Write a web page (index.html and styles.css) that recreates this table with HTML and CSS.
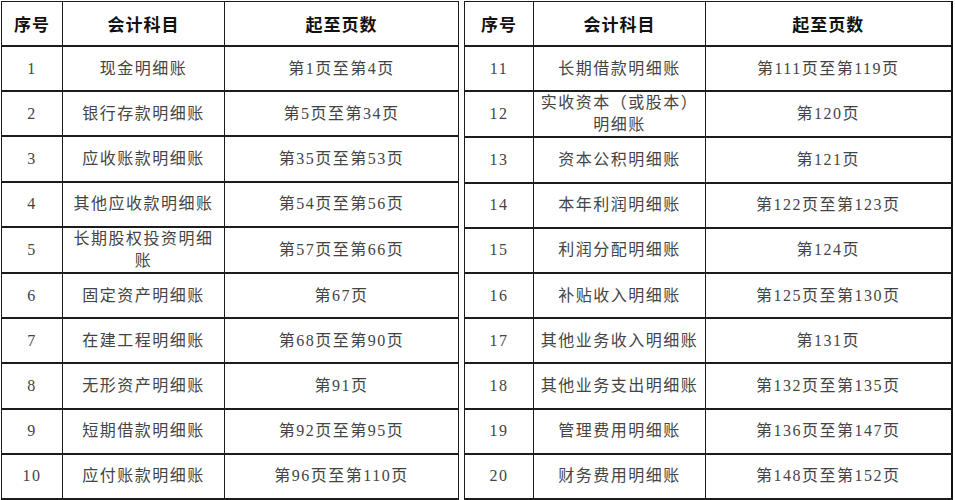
FILE: index.html
```html
<!DOCTYPE html>
<html lang="zh-CN">
<head>
<meta charset="utf-8">
<title>明细账目录</title>
<link rel="stylesheet" href="styles.css">
</head>
<body>
<div class="sheet">
  <table class="ledger ledger-left">
    <colgroup><col class="c-no"><col class="c-name"><col class="c-pages"></colgroup>
    <thead>
      <tr><th>序号</th><th>会计科目</th><th>起至页数</th></tr>
    </thead>
    <tbody>
      <tr><td>1</td><td>现金明细账</td><td>第1页至第4页</td></tr>
      <tr><td>2</td><td>银行存款明细账</td><td>第5页至第34页</td></tr>
      <tr><td>3</td><td>应收账款明细账</td><td>第35页至第53页</td></tr>
      <tr><td>4</td><td>其他应收款明细账</td><td>第54页至第56页</td></tr>
      <tr><td>5</td><td class="wrap">长期股权投资明细<br>账</td><td>第57页至第66页</td></tr>
      <tr><td>6</td><td>固定资产明细账</td><td>第67页</td></tr>
      <tr><td>7</td><td>在建工程明细账</td><td>第68页至第90页</td></tr>
      <tr><td>8</td><td>无形资产明细账</td><td>第91页</td></tr>
      <tr><td>9</td><td>短期借款明细账</td><td>第92页至第95页</td></tr>
      <tr><td>10</td><td>应付账款明细账</td><td>第96页至第110页</td></tr>
    </tbody>
  </table>
  <table class="ledger ledger-right">
    <colgroup><col class="c-no"><col class="c-name"><col class="c-pages"></colgroup>
    <thead>
      <tr><th>序号</th><th>会计科目</th><th>起至页数</th></tr>
    </thead>
    <tbody>
      <tr><td>11</td><td>长期借款明细账</td><td>第111页至第119页</td></tr>
      <tr><td>12</td><td class="wrap">实收资本（或股本）<br>明细账</td><td>第120页</td></tr>
      <tr><td>13</td><td>资本公积明细账</td><td>第121页</td></tr>
      <tr><td>14</td><td>本年利润明细账</td><td>第122页至第123页</td></tr>
      <tr><td>15</td><td>利润分配明细账</td><td>第124页</td></tr>
      <tr><td>16</td><td>补贴收入明细账</td><td>第125页至第130页</td></tr>
      <tr><td>17</td><td>其他业务收入明细账</td><td>第131页</td></tr>
      <tr><td>18</td><td>其他业务支出明细账</td><td>第132页至第135页</td></tr>
      <tr><td>19</td><td>管理费用明细账</td><td>第136页至第147页</td></tr>
      <tr><td>20</td><td>财务费用明细账</td><td>第148页至第152页</td></tr>
    </tbody>
  </table>
</div>
</body>
</html>
```

FILE: styles.css
```css
html, body {
  margin: 0;
  padding: 0;
  background: #ffffff;
}

.sheet {
  display: flex;
  gap: 5px;
  padding: 1px 0 0 1px;
  width: 955px;
  height: 500px;
  box-sizing: border-box;
}

.ledger {
  border-collapse: collapse;
  table-layout: fixed;
  border: 1px solid #1c1c1c;
}

.ledger-left { width: 457px; }
.ledger-right { width: 487px; }

.ledger-left .c-no { width: 61px; }
.ledger-left .c-name { width: 162px; }
.ledger-left .c-pages { width: 234px; }

.ledger-right .c-no { width: 69px; }
.ledger-right .c-name { width: 172px; }
.ledger-right .c-pages { width: 246px; }

.ledger th,
.ledger td {
  height: 43px;
  padding: 0;
  text-align: center;
  vertical-align: middle;
  border-left: 1px solid #1c1c1c;
  border-right: 1px solid #1c1c1c;
  border-top: 2px solid #1c1c1c;
  border-bottom: 2px solid #1c1c1c;
  white-space: nowrap;
}

.ledger-right th:last-child,
.ledger-right td:last-child {
  border-right: 2px solid #111111;
}

.ledger thead th {
  border-top: 1px solid #1c1c1c;
  border-bottom: 1px solid #1c1c1c;
}

.ledger th {
  font-family: "Noto Sans CJK SC", "Noto Sans", sans-serif;
  font-weight: 700;
  font-size: 17px;
  letter-spacing: 1px;
  color: #111111;
}

.ledger td {
  font-family: "Liberation Serif", "Noto Sans CJK SC", serif;
  font-weight: 400;
  font-size: 16px;
  letter-spacing: 1.5px;
  color: #444444;
  line-height: 20px;
}

.ledger td.wrap {
  line-height: 22px;
}
```
